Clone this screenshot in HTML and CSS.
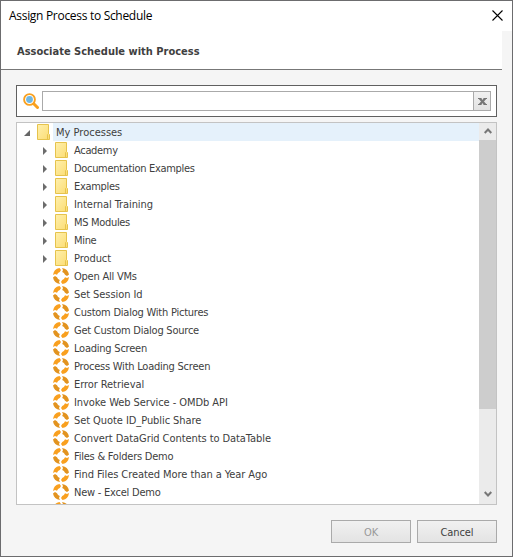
FILE: index.html
```
<!DOCTYPE html>
<html lang="en">
<head>
<meta charset="utf-8">
<title>Assign Process to Schedule</title>
<link rel="stylesheet" href="styles.css">
</head>
<body>
<svg class="defs" aria-hidden="true">
  <defs>
    <linearGradient id="paper" x1="0" y1="0" x2="1" y2="1"><stop offset="0" stop-color="#fff0ad"/><stop offset="1" stop-color="#fbdc72"/></linearGradient>
    <symbol id="folder" viewBox="0 0 13 16">
      <path d="M.5.5h11v9l1 1v5H.5z" fill="url(#paper)" stroke="#e6c34c"/>
      <path d="M10.5 15.500v-5l1-1" fill="none" stroke="#e6c34c"/>
    </symbol>
    <symbol id="process" viewBox="0 0 16 16">
      <path d="M0 7A8 8 0 0 1 6.500 0L8 2 6.800 4A4.500 4.500 0 0 0 4 6.800L2 6z" fill="#f9a01f"/>
      <path d="M9 0A8 8 0 0 1 16 6.500L14 8 12 6.800A4.500 4.500 0 0 0 9.200 4L10 2z" fill="#e2931f"/>
      <path d="M16 9A8 8 0 0 1 9.500 16L8 14 9.200 12A4.500 4.500 0 0 0 12 9.200L14 10z" fill="#f9a01f"/>
      <path d="M7 16A8 8 0 0 1 0 9.500L2 8 4 9.200A4.500 4.500 0 0 0 6.800 12L6 14z" fill="#e2931f"/>
    </symbol>
    <symbol id="closed" viewBox="0 0 4 8"><path d="M0 0l4 4-4 4z" fill="#6c6c6c"/></symbol>
    <symbol id="open" viewBox="0 0 6 6"><path d="M6 0v6H0z" fill="#666"/></symbol>
  </defs>
</svg>
<div class="window">
  <header class="titlebar">
    <h1>Assign Process to Schedule</h1>
    <svg class="close" viewBox="0 0 11 11"><path d="M.5.5l10 10M10.500.5l-10 10" stroke="#000" stroke-width="1.100"/></svg>
  </header>
  <h2 class="heading"><span>Associate Schedule with Process</span></h2>
  <div class="search">
    <svg class="lens" viewBox="0 0 16 16"><path d="M10 10l4.500 4.500" stroke="#f9a01f" stroke-width="3" stroke-linecap="round"/><circle cx="6.500" cy="6.500" r="5.400" fill="#fff" stroke="#f9a01f" stroke-width="1.900"/><circle cx="6.500" cy="6.500" r="3.400" fill="#70b7e2"/></svg>
    <div class="field"><span class="clear"><svg viewBox="0 0 9 7"><path d="M0 .5h3.500M5.500.5H9M0 6.500h3.500M5.500 6.500H9" stroke="#777"/><path d="M1.800.5l5.400 6M7.200.5l-5.400 6" stroke="#777" stroke-width="2.200"/></svg></span></div>
  </div>
  <div class="tree">
    <ul class="rows">
      <li class="root"><svg class="arrow-open"><use href="#open"/></svg><svg class="folder"><use href="#folder"/></svg><span>My Processes</span></li>
      <li class="tight"><svg class="arrow"><use href="#closed"/></svg><svg class="folder"><use href="#folder"/></svg><span>Academy</span></li>
      <li class="tight"><svg class="arrow"><use href="#closed"/></svg><svg class="folder"><use href="#folder"/></svg><span>Documentation Examples</span></li>
      <li class="tight"><svg class="arrow"><use href="#closed"/></svg><svg class="folder"><use href="#folder"/></svg><span>Examples</span></li>
      <li><svg class="arrow"><use href="#closed"/></svg><svg class="folder"><use href="#folder"/></svg><span>Internal Training</span></li>
      <li class="tight"><svg class="arrow"><use href="#closed"/></svg><svg class="folder"><use href="#folder"/></svg><span>MS Modules</span></li>
      <li class="tight"><svg class="arrow"><use href="#closed"/></svg><svg class="folder"><use href="#folder"/></svg><span>Mine</span></li>
      <li><svg class="arrow"><use href="#closed"/></svg><svg class="folder"><use href="#folder"/></svg><span>Product</span></li>
      <li class="snug"><svg class="process"><use href="#process"/></svg><span>Open All VMs</span></li>
      <li><svg class="process"><use href="#process"/></svg><span>Set Session Id</span></li>
      <li class="snug"><svg class="process"><use href="#process"/></svg><span>Custom Dialog With Pictures</span></li>
      <li class="snug"><svg class="process"><use href="#process"/></svg><span>Get Custom Dialog Source</span></li>
      <li class="snug"><svg class="process"><use href="#process"/></svg><span>Loading Screen</span></li>
      <li class="snug"><svg class="process"><use href="#process"/></svg><span>Process With Loading Screen</span></li>
      <li><svg class="process"><use href="#process"/></svg><span>Error Retrieval</span></li>
      <li><svg class="process"><use href="#process"/></svg><span>Invoke Web Service - OMDb API</span></li>
      <li><svg class="process"><use href="#process"/></svg><span>Set Quote ID_Public Share</span></li>
      <li><svg class="process"><use href="#process"/></svg><span>Convert DataGrid Contents to DataTable</span></li>
      <li class="snug"><svg class="process"><use href="#process"/></svg><span>Files &amp; Folders Demo</span></li>
      <li><svg class="process"><use href="#process"/></svg><span>Find Files Created More than a Year Ago</span></li>
      <li class="snug"><svg class="process"><use href="#process"/></svg><span>New - Excel Demo</span></li>
      <li><svg class="process"><use href="#process"/></svg></li>
    </ul>
    <div class="scrollbar">
      <svg class="up" viewBox="0 0 8 6"><path d="M.7 5 4 1.500 7.300 5" fill="none" stroke="#777" stroke-width="2"/></svg>
      <div class="thumb"></div>
      <svg class="down" viewBox="0 0 8 6"><path d="M.7 1 4 4.500 7.300 1" fill="none" stroke="#777" stroke-width="2"/></svg>
    </div>
  </div>
  <footer class="actions"><button disabled>OK</button><button>Cancel</button></footer>
</div>
</body>
</html>
```
FILE: styles.css
```
* { box-sizing: border-box; }
body { margin: 0; font-family: "DejaVu Sans Condensed", "DejaVu Sans", sans-serif; font-stretch: condensed; font-size: 11px; color: #404040; }
svg { display: block; flex: none; }
.defs { position: absolute; width: 0; height: 0; }
.window { width: 513px; height: 557px; border: 1px solid #6c6c6e; background: #f5f5f5; display: flex; flex-direction: column; overflow: hidden; }
.titlebar { height: 30px; flex: none; background: #fff; display: flex; justify-content: space-between; align-items: center; padding: 0 9px 0 8px; }
.titlebar h1 { margin: 0; font: 12px/28px "Open Sans", sans-serif; letter-spacing: -0.3px; color: #000; }
.close { width: 11px; height: 11px; margin-top: -2px; }
.heading { margin: 0 10px 0 0; height: 39px; flex: none; background: #fff; border-bottom: 1px solid #777; padding-left: 16px; font-size: 11px; line-height: 42px; font-weight: bold; color: #404040; }
.search { margin: 15px 15px 0; height: 32px; flex: none; border: 1px solid #606060; background: #fff; display: flex; padding: 5px 5px 5px 6px; }
.lens { width: 16px; height: 16px; margin: 2px 3px 0 0; }
.field { flex: 1; height: 20px; border: 1px solid #aaa; display: flex; justify-content: flex-end; }
.clear { width: 17px; border-left: 1px solid #aaa; background: linear-gradient(#f1f1f1, #e2e2e2); display: flex; justify-content: center; align-items: center; }
.clear svg { width: 9px; height: 7px; }
.tree { margin: 5px 15px 0; height: 383px; flex: none; border: 1px solid #c3c3c3; background: #fff; display: flex; overflow: hidden; }
.rows { flex: 1; margin: 0; padding: 0; list-style: none; height: 381px; overflow: hidden; }
.rows li { height: 18px; display: flex; align-items: center; padding-left: 26px; line-height: 18px; white-space: nowrap; letter-spacing: -0.07px; }
.rows .snug { letter-spacing: -0.23px; }
.rows .tight { letter-spacing: -0.32px; }
.rows span { height: 18px; line-height: 20px; }
.rows .root { padding-left: 7px; letter-spacing: 0; }
.rows .root span { flex: 1; background: #e5f1fb; padding-left: 3px; margin-left: 3px; }
.arrow-open { width: 6px; height: 6px; margin: 2px 7px 0 0; }
.arrow { width: 4px; height: 8px; margin: 1px 8px 0 0; }
.rows .folder { width: 13px; height: 16px; margin-right: 6px; }
.rows .root .folder { margin-right: 0; }
.process { width: 16px; height: 16px; margin: 0 5px 0 10px; }
.scrollbar { width: 17px; background: #ebebeb; display: flex; flex-direction: column; align-items: center; }
.scrollbar svg { width: 8px; height: 6px; }
.scrollbar .up { margin: 5px 0 6px; }
.thumb { width: 100%; height: 269px; background: #cdcdcd; }
.scrollbar .down { margin-top: 82px; }
.actions { display: flex; justify-content: flex-end; gap: 6px; padding: 15px 15px 0 0; }
.actions button { width: 80px; height: 23px; padding: 1px 0 0; border: 1px solid #aaa; background: linear-gradient(#f1f1f1, #e3e3e3); font: inherit; letter-spacing: -0.1px; color: #404040; }
.actions button:disabled { color: #999; }
```
